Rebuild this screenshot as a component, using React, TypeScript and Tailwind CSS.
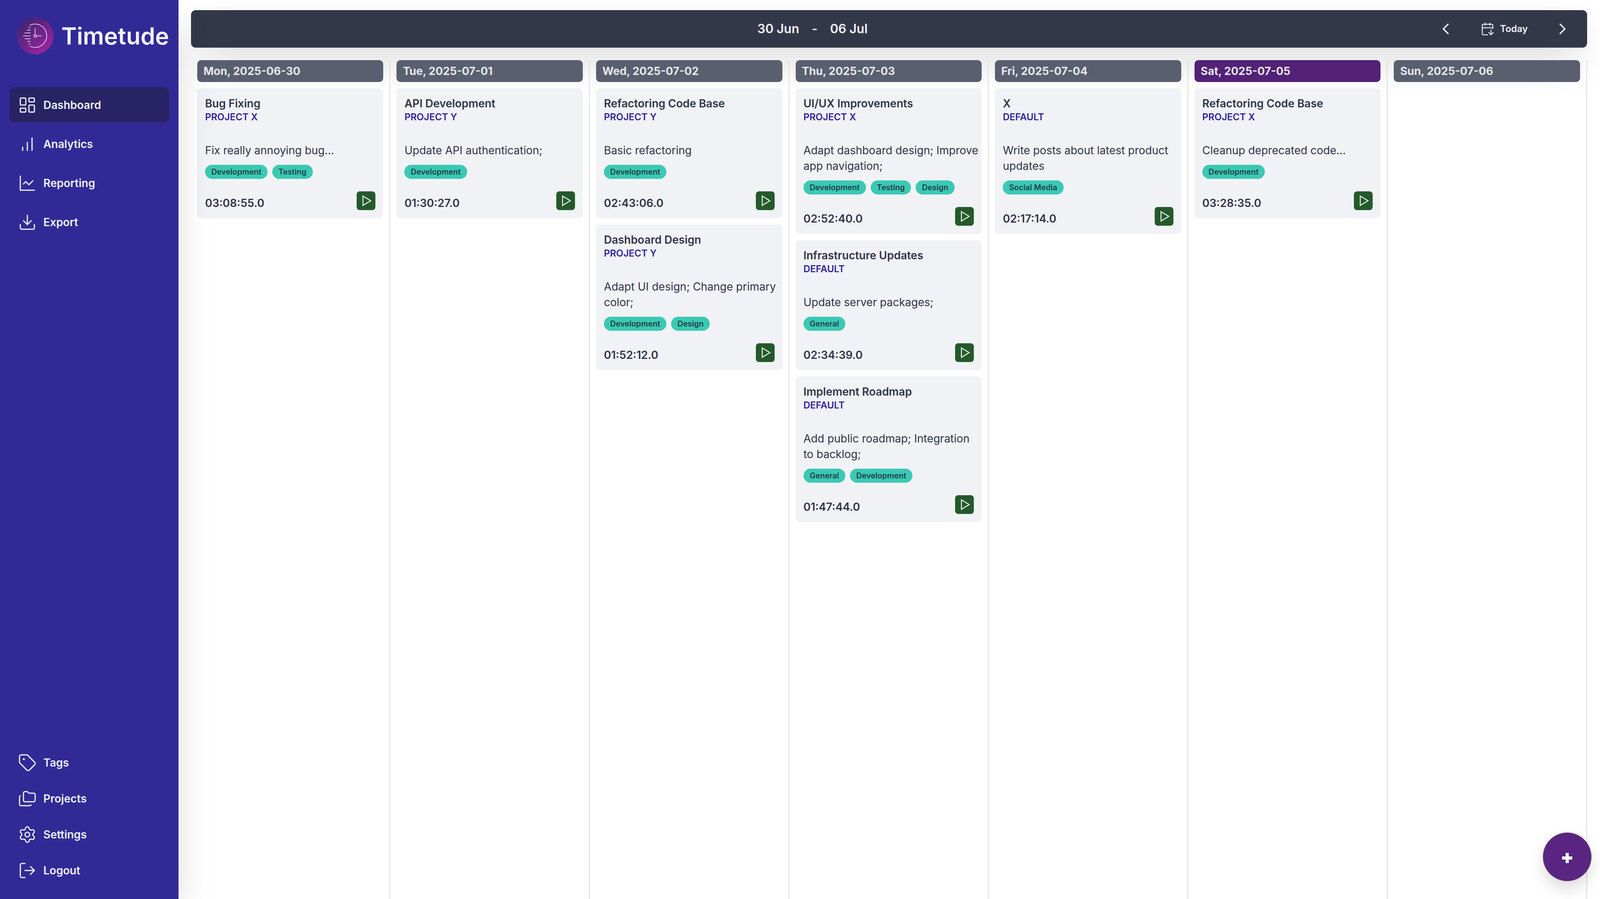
import React from "react";
import {
  LayoutDashboard,
  Download,
  Tag,
  Folders,
  Settings,
  LogOut,
  ChevronLeft,
  ChevronRight,
  CalendarArrowDown,
} from "lucide-react";

type Entry = {
  title: string;
  project: string;
  description: string;
  tags: string[];
  time: string;
};

type Day = {
  label: string;
  today?: boolean;
  entries: Entry[];
};

const days: Day[] = [
  {
    label: "Mon, 2025-06-30",
    entries: [
      { title: "Bug Fixing", project: "PROJECT X", description: "Fix really annoying bug...", tags: ["Development", "Testing"], time: "03:08:55.0" },
    ],
  },
  {
    label: "Tue, 2025-07-01",
    entries: [
      { title: "API Development", project: "PROJECT Y", description: "Update API authentication;", tags: ["Development"], time: "01:30:27.0" },
    ],
  },
  {
    label: "Wed, 2025-07-02",
    entries: [
      { title: "Refactoring Code Base", project: "PROJECT Y", description: "Basic refactoring", tags: ["Development"], time: "02:43:06.0" },
      { title: "Dashboard Design", project: "PROJECT Y", description: "Adapt UI design; Change primary\ncolor;", tags: ["Development", "Design"], time: "01:52:12.0" },
    ],
  },
  {
    label: "Thu, 2025-07-03",
    entries: [
      { title: "UI/UX Improvements", project: "PROJECT X", description: "Adapt dashboard design; Improve\napp navigation;", tags: ["Development", "Testing", "Design"], time: "02:52:40.0" },
      { title: "Infrastructure Updates", project: "DEFAULT", description: "Update server packages;", tags: ["General"], time: "02:34:39.0" },
      { title: "Implement Roadmap", project: "DEFAULT", description: "Add public roadmap; Integration to backlog;", tags: ["General", "Development"], time: "01:47:44.0" },
    ],
  },
  {
    label: "Fri, 2025-07-04",
    entries: [
      { title: "X", project: "DEFAULT", description: "Write posts about latest product updates", tags: ["Social Media"], time: "02:17:14.0" },
    ],
  },
  {
    label: "Sat, 2025-07-05",
    today: true,
    entries: [
      { title: "Refactoring Code Base", project: "PROJECT X", description: "Cleanup deprecated code...", tags: ["Development"], time: "03:28:35.0" },
    ],
  },
  { label: "Sun, 2025-07-06", entries: [] },
];

type IconProps = { size?: number; strokeWidth?: number };

const BarsIcon = ({ size = 48, strokeWidth = 1.5 }: IconProps) => (
  <svg width={size} height={size} viewBox="0 0 24 24" fill="none" stroke="currentColor" strokeWidth={strokeWidth} strokeLinecap="round" strokeLinejoin="round">
    <path d="M12 20V10" />
    <path d="M18 20V4" />
    <path d="M6 20v-4" />
  </svg>
);

const LineChartIcon = ({ size = 48, strokeWidth = 1.5 }: IconProps) => (
  <svg width={size} height={size} viewBox="0 0 24 24" fill="none" stroke="currentColor" strokeWidth={strokeWidth} strokeLinecap="round" strokeLinejoin="round">
    <path d="M3 3v18h18" />
    <path d="m19 9-5 5-4-4-3 3" />
  </svg>
);

const topNav = [
  { label: "Dashboard", icon: LayoutDashboard, active: true },
  { label: "Analytics", icon: BarsIcon },
  { label: "Reporting", icon: LineChartIcon },
  { label: "Export", icon: Download },
];

const bottomNav = [
  { label: "Tags", icon: Tag },
  { label: "Projects", icon: Folders },
  { label: "Settings", icon: Settings },
  { label: "Logout", icon: LogOut },
];

const Logo = () => (
  <svg width="94" height="94" viewBox="0 0 94 94" fill="none" className="shrink-0">
    <defs>
      <linearGradient id="logoFill" x1="10" y1="10" x2="78" y2="88" gradientUnits="userSpaceOnUse">
        <stop offset="0" stopColor="#3f2471" />
        <stop offset="1" stopColor="#9a24a0" />
      </linearGradient>
    </defs>
    <circle cx="47" cy="47" r="47" fill="url(#logoFill)" />
    <g stroke="#f1f2f8" strokeWidth="1.5" strokeLinecap="round">
      <path d="M33.5 19.6A30 30 0 1 1 33.5 73.4" />
      <path d="M47 27V43.5" />
      <path d="M50.5 47H63" />
      <circle cx="47" cy="47" r="3.2" />
      <path d="M30.5 25.5H34.5" />
      <path d="M26.5 32.3H34.5" />
      <path d="M20.5 39.3H34.5" />
      <path d="M16.5 47H34.5" />
      <path d="M20.5 54.3H34.5" />
      <path d="M27 61.3H34.5" />
      <path d="M30.5 67.6H34.5" />
    </g>
  </svg>
);

const PlayIcon = () => (
  <svg width="34" height="34" viewBox="0 0 24 24" fill="none" stroke="#f1f2f8" strokeWidth="1.7" strokeLinejoin="miter">
    <polygon points="6.5 3.5 20.5 12 6.5 20.5" />
  </svg>
);

const EntryCard = ({ entry }: { entry: Entry }) => (
  <div className="rounded-[10px] bg-[#f1f2f6] pt-5 pr-5 pb-[21px] pl-5 text-[#2f3447]">
    <h3 className="text-[28px] leading-[38px] font-semibold">{entry.title}</h3>
    <p className="mt-px text-[24px] leading-[30px] font-semibold text-[#30229b]">{entry.project}</p>
    <p className="mt-[50px] -mr-4 text-[28px] leading-10 whitespace-pre-line">{entry.description}</p>
    <div className="mt-[17px] flex gap-3">
      {entry.tags.map((tag) => (
        <span
          key={tag}
          className="flex h-9 items-center rounded-full bg-[#3bc9b3] px-4 text-[20px] font-semibold text-[#1f3d45]"
        >
          {tag}
        </span>
      ))}
    </div>
    <div className="mt-8 flex items-end justify-between">
      <span className="text-[28px] leading-9 font-semibold">{entry.time}</span>
      <button className="flex size-12 items-center justify-center rounded-lg bg-[#245a2a]">
        <PlayIcon />
      </button>
    </div>
  </div>
);

export default function App() {
  return (
    <div className="relative flex h-screen w-screen overflow-hidden bg-white font-['Inter',sans-serif]">
      {/* Sidebar */}
      <aside className="z-20 flex w-[11.155%] shrink-0 flex-col justify-between bg-[#312a96] text-[#f1f2f8] shadow-[0_50px_100px_-24px_rgba(0,0,0,0.22)]">
        <div>
          <div className="flex items-center gap-[20px] pt-[45px] pl-[43px]">
            <Logo />
            <span className="text-[60px] leading-none font-semibold">Timetude</span>
          </div>
          <nav className="mt-[84px] flex flex-col gap-[9px] px-6">
            {topNav.map(({ label, icon: Icon, active }) => (
              <a
                key={label}
                className={
                  active
                    ? "flex h-[91px] items-center gap-[17px] rounded-[14px] bg-[#282365] pl-[22px] text-[28px] font-semibold"
                    : "flex h-[91px] items-center gap-[17px] rounded-[14px] pl-[22px] text-[28px] font-semibold"
                }
              >
                <Icon size={48} strokeWidth={1.5} />
                {label}
              </a>
            ))}
          </nav>
        </div>
        <nav className="flex flex-col px-6 pb-[27px]">
          {bottomNav.map(({ label, icon: Icon }) => (
            <a key={label} className="flex h-[92px] items-center gap-[17px] pl-[22px] text-[28px] font-semibold">
              <Icon size={48} strokeWidth={1.5} />
              {label}
            </a>
          ))}
        </nav>
      </aside>

      {/* Main */}
      <main className="flex min-w-0 flex-1 flex-col pt-[26px] pr-[33px] pl-8">
        <header className="z-10 flex h-24 shrink-0 items-center rounded-[12px] bg-[#333849] pr-[33px] text-[#f1f2f8] shadow-[0_50px_100px_-24px_rgba(0,0,0,0.22),0_0_40px_rgba(0,0,0,0.03)]">
          <div className="flex flex-1 items-center justify-center gap-8 text-[32px] font-semibold">
            <span>30 Jun</span>
            <span>-</span>
            <span>06 Jul</span>
          </div>
          <div className="flex items-center gap-[59px]">
            <button className="flex w-[60px] justify-center">
              <ChevronLeft size={48} strokeWidth={1.75} />
            </button>
            <button className="flex items-center gap-[14px] text-[24px] font-semibold">
              <CalendarArrowDown size={36} strokeWidth={1.5} />
              Today
            </button>
            <button className="flex w-[60px] justify-center">
              <ChevronRight size={48} strokeWidth={1.75} />
            </button>
          </div>
        </header>

        <div className="z-10 mt-8 grid min-w-0 flex-1 grid-cols-7">
          {days.map((day) => (
            <section key={day.label} className="flex min-w-0 flex-col gap-4 border-r-2 border-[#dcdce4] px-4">
              <div
                className={
                  day.today
                    ? "flex h-14 shrink-0 items-center rounded-[10px] bg-[#532175] px-4 text-[28px] font-bold text-[#e6e7ee]"
                    : "flex h-14 shrink-0 items-center rounded-[10px] bg-[#5a5f70] px-4 text-[28px] font-bold text-[#e6e7ee]"
                }
              >
                {day.label}
              </div>
              {day.entries.map((entry) => (
                <EntryCard key={entry.title + entry.time} entry={entry} />
              ))}
            </section>
          ))}
        </div>
      </main>

      {/* Add entry */}
      <button className="absolute right-[22px] bottom-[46px] z-30 flex size-[124px] items-center justify-center rounded-full bg-[#5a2580] shadow-[0_20px_40px_rgba(0,0,0,0.14),0_0_3px_rgba(0,0,0,0.2)]">
        <svg width="26" height="26" viewBox="0 0 26 26" className="mt-[6px]" fill="#ffffff">
          <rect x="9" y="0" width="8" height="26" />
          <rect x="0" y="9" width="26" height="8" />
        </svg>
      </button>
    </div>
  );
}
